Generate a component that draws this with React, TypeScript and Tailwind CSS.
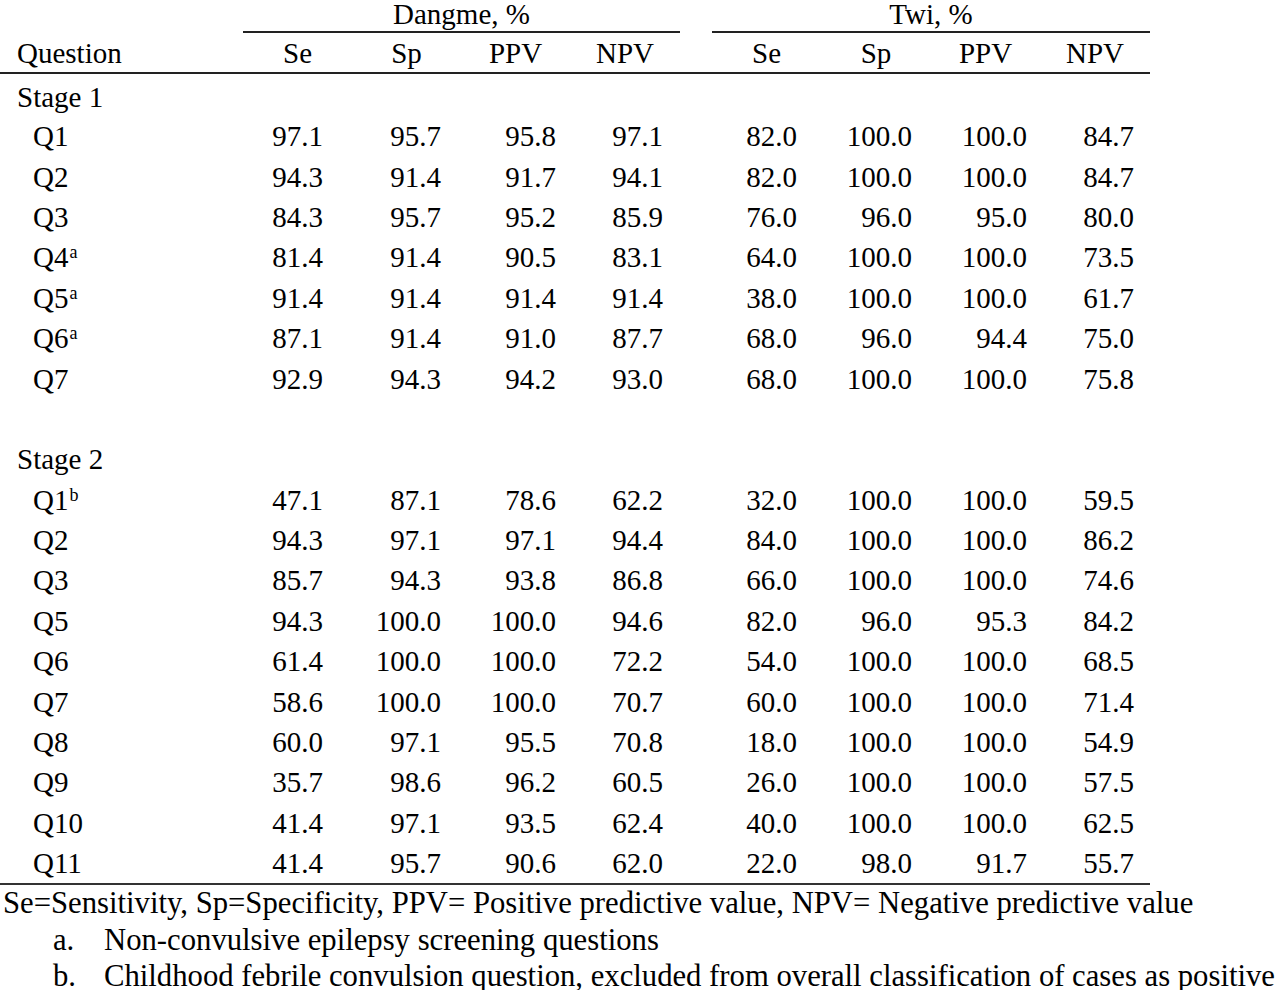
import React from "react";

const cols = "grid grid-cols-[243px_109px_109px_109px_110px_32px_109px_110px_109px_110px]";

type Row = { q: string; sup?: string; v: string[] };

const stage1: Row[] = [
  { q: "Q1", v: ["97.1", "95.7", "95.8", "97.1", "82.0", "100.0", "100.0", "84.7"] },
  { q: "Q2", v: ["94.3", "91.4", "91.7", "94.1", "82.0", "100.0", "100.0", "84.7"] },
  { q: "Q3", v: ["84.3", "95.7", "95.2", "85.9", "76.0", "96.0", "95.0", "80.0"] },
  { q: "Q4", sup: "a", v: ["81.4", "91.4", "90.5", "83.1", "64.0", "100.0", "100.0", "73.5"] },
  { q: "Q5", sup: "a", v: ["91.4", "91.4", "91.4", "91.4", "38.0", "100.0", "100.0", "61.7"] },
  { q: "Q6", sup: "a", v: ["87.1", "91.4", "91.0", "87.7", "68.0", "96.0", "94.4", "75.0"] },
  { q: "Q7", v: ["92.9", "94.3", "94.2", "93.0", "68.0", "100.0", "100.0", "75.8"] },
];

const stage2: Row[] = [
  { q: "Q1", sup: "b", v: ["47.1", "87.1", "78.6", "62.2", "32.0", "100.0", "100.0", "59.5"] },
  { q: "Q2", v: ["94.3", "97.1", "97.1", "94.4", "84.0", "100.0", "100.0", "86.2"] },
  { q: "Q3", v: ["85.7", "94.3", "93.8", "86.8", "66.0", "100.0", "100.0", "74.6"] },
  { q: "Q5", v: ["94.3", "100.0", "100.0", "94.6", "82.0", "96.0", "95.3", "84.2"] },
  { q: "Q6", v: ["61.4", "100.0", "100.0", "72.2", "54.0", "100.0", "100.0", "68.5"] },
  { q: "Q7", v: ["58.6", "100.0", "100.0", "70.7", "60.0", "100.0", "100.0", "71.4"] },
  { q: "Q8", v: ["60.0", "97.1", "95.5", "70.8", "18.0", "100.0", "100.0", "54.9"] },
  { q: "Q9", v: ["35.7", "98.6", "96.2", "60.5", "26.0", "100.0", "100.0", "57.5"] },
  { q: "Q10", v: ["41.4", "97.1", "93.5", "62.4", "40.0", "100.0", "100.0", "62.5"] },
  { q: "Q11", v: ["41.4", "95.7", "90.6", "62.0", "22.0", "98.0", "91.7", "55.7"] },
];

const pads = ["pr-[29px]", "pr-[20px]", "pr-[14px]", "pr-[17px]", "pr-[24px]", "pr-[19px]", "pr-[13px]", "pr-[16px]"];

function DataRow({ r }: { r: Row }) {
  const cells = r.v.map((val, i) => (
    <div key={i} className={`text-right ${pads[i]}`}>
      {val}
    </div>
  ));
  return (
    <div className={`${cols} h-[40.4px] items-center`}>
      <div className="pl-[33px]">
        {r.q}
        {r.sup && <sup className="text-[18px] relative -top-[9px] ml-[1px]">{r.sup}</sup>}
      </div>
      {cells.slice(0, 4)}
      <div />
      {cells.slice(4)}
    </div>
  );
}

export default function App() {
  const heads = ["Se", "Sp", "PPV", "NPV"];
  return (
    <div
      className="w-[1280px] h-[990px] bg-white text-black overflow-hidden text-[29px] leading-[36px]"
      style={{ fontFamily: '"Liberation Serif", "Times New Roman", serif' }}
    >
      <div className="w-[1150px]">
        <div className={`${cols} h-[33px]`}>
          <div />
          <div className="col-span-4 border-b-2 border-[#222] text-center leading-[28px] h-[33px]">Dangme, %</div>
          <div />
          <div className="col-span-4 border-b-2 border-[#222] text-center leading-[28px] h-[33px]">Twi, %</div>
        </div>
        <div className={`${cols} h-[41px] items-center border-b-2 border-[#222]`}>
          <div className="pl-[17px]">Question</div>
          {heads.map((h) => (
            <div key={"d" + h} className="text-center">
              {h}
            </div>
          ))}
          <div />
          {heads.map((h) => (
            <div key={"t" + h} className="text-center">
              {h}
            </div>
          ))}
        </div>
        <div className="pt-[4px] border-b-2 border-[#333]">
          <div className="h-[38px] flex items-center pl-[17px]">Stage 1</div>
          {stage1.map((r, i) => (
            <DataRow key={"a" + i} r={r} />
          ))}
          <div className="h-[40.4px]" />
          <div className="h-[40.4px] flex items-center pl-[17px]">Stage 2</div>
          {stage2.map((r, i) => (
            <DataRow key={"b" + i} r={r} />
          ))}
        </div>
      </div>
      <div className="whitespace-nowrap text-[30.7px] leading-[36.5px] pl-[3px]">
        <div>Se=Sensitivity, Sp=Specificity, PPV= Positive predictive value, NPV= Negative predictive value</div>
        <div className="flex">
          <span className="w-[101px] pl-[50px]">a.</span>
          <span>Non-convulsive epilepsy screening questions</span>
        </div>
        <div className="flex">
          <span className="w-[101px] pl-[50px]">b.</span>
          <span>Childhood febrile convulsion question, excluded from overall classification of cases as positive</span>
        </div>
      </div>
    </div>
  );
}
